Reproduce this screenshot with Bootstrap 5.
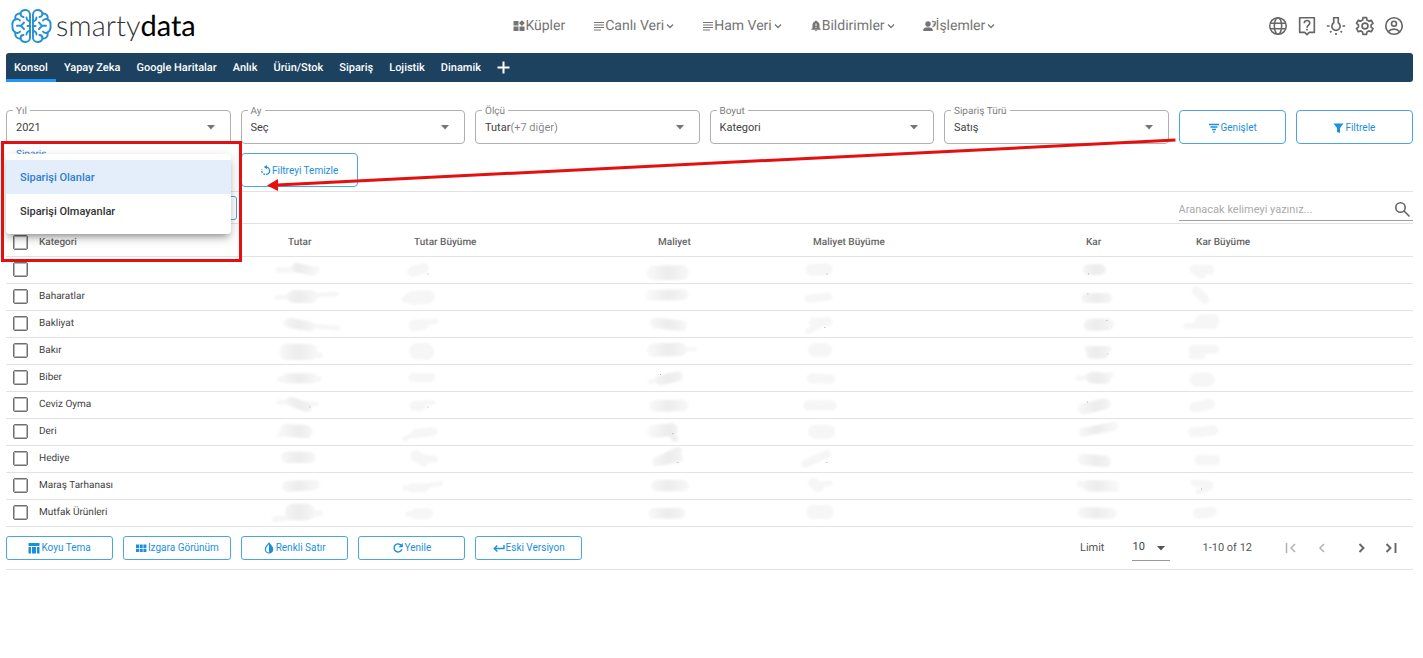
<!DOCTYPE html>
<html lang="tr">
<head>
<meta charset="utf-8">
<meta name="viewport" content="width=device-width, initial-scale=1">
<title>smartydata</title>
<link href="https://cdn.jsdelivr.net/npm/bootstrap@5.3.0/dist/css/bootstrap.min.css" rel="stylesheet">
<script src="https://cdn.jsdelivr.net/npm/bootstrap@5.3.0/dist/js/bootstrap.bundle.min.js"></script>
<style>
  :root { --blue: #1a8fdc; --navy: #1d425f; --line: #e2e2e2; --ink: #424242; --grey: #757575; }
  body { font-family: Roboto, "Liberation Sans", sans-serif; font-size: 11px; line-height: 16px; color: var(--ink); background: #fff; text-rendering: geometricPrecision; }
  svg { flex: none; display: block; }
  .page { padding: 0 10px 0 6px; }
  .topbar { height: 53px; padding: 0 8px 2px 5px; }
  .brand { color: #333; text-decoration: none; margin-right: 46px; gap: 4px; }
  .brand-word { font-family: Lato, sans-serif; font-weight: 300; font-size: 29px; line-height: 34px; }
  .brand-word b { font-weight: 400; color: #000; }
  .mainmenu { gap: 28px; }
  .mainmenu a { color: var(--grey); font-size: 14px; line-height: 20px; text-decoration: none; }
  .mainmenu .chev { margin-left: 2px; }
  .tools { gap: 7px; }
  .tools button, .pager button, .plain { border: 0; background: none; padding: 0; color: #666; }
  .tabs { background: var(--navy); border-radius: 3px; height: 29px; }
  .tabs a { color: #fff; font-weight: 500; padding: 7px 8px 3px; border-bottom: 3px solid transparent; text-decoration: none; line-height: 16px; }
  .tabs a.active { border-color: #2196f3; }
  .filters { margin-top: 28px; row-gap: 9px; }
  .cell { padding-right: 10px; }
  .field { height: 34px; }
  .field label { position: absolute; left: 7px; top: -5px; padding: 0 3px; background: #fff; color: #808080; font-size: 10px; line-height: 14px; }
  .field label.open { color: #2f7fd0; }
  .box { width: 100%; height: 34px; border: 1px solid #b0b0b0; border-radius: 4px; background: #fff; color: var(--ink); padding: 2px 9px 0; appearance: none; text-align: left; }
  .field > svg { position: absolute; right: 16px; top: 15px; color: #757575; pointer-events: none; }
  .act { width: 100%; height: 34px; border: 1px solid #48a7e2; border-radius: 4px; background: #fff; color: var(--blue); display: flex; align-items: center; justify-content: center; gap: 1px; padding: 1px 0 0; font-size: 10px; }
  .act.low { height: 24px; border-radius: 3px; }
  .menu { position: absolute; z-index: 5; left: 0; right: 0; top: 1px; padding: 6px 0; background: #fff; border-radius: 4px; box-shadow: 0 5px 6px -3px rgba(0,0,0,.3), 0 4px 12px rgba(0,0,0,.2); }
  .menu button { display: block; width: 100%; height: 34px; padding: 1px 14px 0; border: 0; background: none; text-align: left; font-weight: 500; color: #333; }
  .menu button.active { background: #e3eefa; color: #2f7fd0; }
  .frame { position: absolute; z-index: 6; left: -5px; right: -11px; top: -12px; height: 121px; border: 3px solid #e60f0f; pointer-events: none; }
  .arrow { position: absolute; z-index: 7; left: 261px; top: 26px; width: calc(83.33% - 264px); height: 56px; pointer-events: none; overflow: visible; }
  .searchrow { margin-top: 4px; height: 33px; border-top: 1px solid var(--line); border-bottom: 1px solid var(--line); }
  .search { width: 16.66%; height: 24px; border-bottom: 1px solid #a0a0a0; color: #666; margin-top: 5px; padding: 2px 2px 0 0; }
  .search input { border: 0; outline: 0; padding: 0; min-width: 0; flex: 1; background: none; color: var(--ink); }
  .search input::placeholder { color: #aaa; opacity: 1; }
  .grid { width: 100%; table-layout: fixed; border-collapse: collapse; font-size: 10px; }
  .grid th, .grid td { padding: 0; border-bottom: 1px solid var(--line); height: 27px; overflow: visible; }
  .grid thead th { height: 32px; padding-top: 6px; font-weight: 500; color: #666; }
  .grid thead th.num { padding-left: 18px; }
  .grid svg { overflow: visible; }
  .grid input { appearance: none; display: block; width: 15px; height: 15px; margin: 0 0 0 7px; border: 1px solid #707070; box-shadow: inset 0 0 0 1px #b5b5b5; border-radius: 2px; background: #fff; }
  .bottom { padding: 8px 0; border-bottom: 1px solid var(--line); }
  .pager { color: #555; padding-right: 13px; font-size: 11px; }
  .limit { width: 38px; height: 26px; border: 0; border-bottom: 1px solid #999; appearance: none; background: #fff; color: var(--ink); padding: 0; }
  .limitbox { margin-left: 28px; }
  .limitbox svg { position: absolute; right: 5px; top: 11px; pointer-events: none; }
  .range { margin: 0 30px 0 32px; }
</style>
</head>
<body>
<svg width="0" height="0" class="position-absolute" aria-hidden="true">
  <defs>
    <filter id="soft" filterUnits="userSpaceOnUse" x="-20" y="-20" width="260" height="120"><feGaussianBlur stdDeviation="2.500"/></filter>
    <linearGradient id="fade" gradientUnits="userSpaceOnUse" x1="15" y1="0" x2="155" y2="0"><stop offset="0" stop-color="#fbfbfb"/><stop offset=".5" stop-color="#ececec"/><stop offset="1" stop-color="#fafafa"/></linearGradient>
    <symbol id="tri" viewBox="0 0 8 5"><path d="M0 0h8L4 4.500z" fill="currentColor"/></symbol>
    <symbol id="chev" viewBox="0 0 8 8"><path d="M1 2.500l3 3 3-3" fill="none" stroke="currentColor" stroke-width="1.300"/></symbol>
    <symbol id="lines" viewBox="0 0 12 12"><path d="M1 2.500h10M1 5h10M1 7.500h10M1 10h7" stroke="currentColor" stroke-width="1"/></symbol>
  </defs>
</svg>
<div class="page">
  <header class="topbar d-flex align-items-center">
    <a class="brand d-flex align-items-center" href="#">
      <svg width="41" height="34" viewBox="0 0 41 34" fill="none" stroke="#2490d3" stroke-width="1.900" stroke-linecap="round" stroke-linejoin="round">
        <g id="lobe">
          <path d="M19 5.500C19 3 17 1 14.500 1C12 1 10 2.500 9.500 4.500C6 4 3.500 7 4.500 10C2 11.500 1 14 1.500 16.500C1 20 2 22 4.500 23.500C3.500 27 6 30 9.500 29.500C10 31.500 12 33 14.500 33C17 33 19 31 19 28.500Z"/>
          <path d="M6 16.800H10L13 13.500M10 16.800L13 20M19 17H16.500M9.500 4.500C9.500 6.500 10.500 8 12.500 8M4.500 10.500C6 9.500 8 10 9 11.500M4.500 23.500C6 24.500 8 24 9 22.500M9.500 29.500C9.500 27.500 10.500 26 12.500 26M19 12C17 12 15.500 10.500 15.500 8.500M19 22C17 22 15.500 23.500 15.500 25.500"/>
        </g>
        <use href="#lobe" transform="matrix(-1 0 0 1 41 0)"/>
      </svg>
      <span class="brand-word">smarty<b>data</b></span>
    </a>
    <nav class="mainmenu d-flex mx-auto">
      <a class="d-flex align-items-center" href="#"><svg width="12" height="12" viewBox="0 0 12 12" fill="currentColor"><path d="M.5 1h5v4.500h-5zM.5 6.500h5V11h-5zM6.500 6.500h5V11h-5zM8.900.2l2.900 2.900-2.900 2.900L6 3.100z"/></svg>Küpler</a>
      <a class="d-flex align-items-center" href="#"><svg width="12" height="12"><use href="#lines"/></svg>Canlı Veri<svg class="chev" width="8" height="8"><use href="#chev"/></svg></a>
      <a class="d-flex align-items-center" href="#"><svg width="12" height="12"><use href="#lines"/></svg>Ham Veri<svg class="chev" width="8" height="8"><use href="#chev"/></svg></a>
      <a class="d-flex align-items-center" href="#"><svg width="12" height="12" viewBox="0 0 12 12"><path d="M6 .5a1 1 0 0 1 1 1C8.800 2 9.500 3.500 9.500 5v3l1.200 1v.7H1.300V9l1.200-1V5C2.500 3.500 3.200 2 5 1.500a1 1 0 0 1 1-1zM4.800 10.300h2.400a1.200 1 0 0 1-2.400 0z" fill="currentColor"/><path d="M6 3.500v2.800M6 7.200v1" stroke="#fff"/></svg>Bildirimler<svg class="chev" width="8" height="8"><use href="#chev"/></svg></a>
      <a class="d-flex align-items-center" href="#"><svg width="13" height="12" viewBox="0 0 13 12" fill="currentColor"><circle cx="5" cy="4" r="2.700"/><path d="M.3 11V9.500C.3 8 3 7.300 5 7.300s4.700.7 4.700 2.200V11z"/><path d="M9.200 1.500l2.300.2M10.500 4.500l1-.5M9.500 6.500c1.500 0 2.500-1 2.800-3V1.500" fill="none" stroke="currentColor" stroke-width="1.300"/></svg>İşlemler<svg class="chev" width="8" height="8"><use href="#chev"/></svg></a>
    </nav>
    <div class="tools d-flex">
      <button aria-label="Dil"><svg width="22" height="22" viewBox="0 0 24 24" fill="none" stroke="currentColor" stroke-width="1.700"><circle cx="12" cy="12" r="9"/><ellipse cx="12" cy="12" rx="4" ry="9"/><path d="M3.500 9h17M3.500 15h17"/></svg></button>
      <button aria-label="Yardım"><svg width="22" height="22" viewBox="0 0 24 24" fill="none" stroke="currentColor" stroke-width="1.800"><path d="M4 3h16v16h-5.500L12 21.500 9.500 19H4z" stroke-linejoin="round"/><path d="M9 9c0-4 6-4 6 0 0 2.200-3 2.200-3 5M12 15v2"/></svg></button>
      <button aria-label="Tema"><svg width="22" height="22" viewBox="0 0 24 24" fill="none" stroke="currentColor" stroke-width="1.800"><path d="M9.500 3h5v5.500a4.500 4.500 0 1 1-5 0zM2 12h3M19 12h3M12 19.500v2.200M5.500 19l1.500-1.500M18.500 19L17 17.500"/></svg></button>
      <button aria-label="Ayarlar"><svg width="22" height="22" viewBox="0 0 24 24" fill="none" stroke="currentColor" stroke-width="1.800"><circle cx="12" cy="12" r="3.200"/><path d="M18.600 13.200c.1-.8.1-1.600 0-2.400l2.200-1.700-2-3.400-2.600 1a7 7 0 0 0-2.100-1.200L13.700 2.800h-3.900l-.4 2.700A7 7 0 0 0 7.300 6.700l-2.600-1-2 3.400 2.200 1.700c-.1.800-.1 1.600 0 2.400l-2.200 1.700 2 3.400 2.600-1a7 7 0 0 0 2.100 1.200l.4 2.700h3.900l.4-2.700a7 7 0 0 0 2.100-1.200l2.600 1 2-3.400z" stroke-linejoin="round"/></svg></button>
      <button aria-label="Hesap"><svg width="22" height="22" viewBox="0 0 24 24" fill="none" stroke="currentColor" stroke-width="1.800"><circle cx="12" cy="12" r="9"/><circle cx="12" cy="9.500" r="2.700"/><path d="M5.800 18.200c3-3.700 9.400-3.700 12.400 0"/></svg></button>
    </div>
  </header>

  <nav class="tabs d-flex">
    <a class="active" href="#">Konsol</a><a href="#">Yapay Zeka</a><a href="#">Google Haritalar</a><a href="#">Anlık</a><a href="#">Ürün/Stok</a><a href="#">Sipariş</a><a href="#">Lojistik</a><a href="#">Dinamik</a>
    <button class="plain text-white px-2" aria-label="Ekle"><svg width="13" height="13" viewBox="0 0 13 13"><path d="M6.500.5v12M.5 6.500h12" stroke="currentColor" stroke-width="2"/></svg></button>
  </nav>

  <main>
    <div class="filters row g-0 position-relative">
      <div class="col-2 cell"><div class="field position-relative"><select class="box" id="yil"><option>2021</option></select><label for="yil">Yıl</label><svg width="8" height="5"><use href="#tri"/></svg></div></div>
      <div class="col-2 cell"><div class="field position-relative"><select class="box" id="ay"><option>Seç</option></select><label for="ay">Ay</label><svg width="8" height="5"><use href="#tri"/></svg></div></div>
      <div class="col-2 cell"><div class="field position-relative"><button class="box" id="olcu" aria-haspopup="listbox">Tutar<span class="text-black-50">(+7 diğer)</span></button><label for="olcu">Ölçü</label><svg width="8" height="5"><use href="#tri"/></svg></div></div>
      <div class="col-2 cell"><div class="field position-relative"><select class="box" id="boyut"><option>Kategori</option></select><label for="boyut">Boyut</label><svg width="8" height="5"><use href="#tri"/></svg></div></div>
      <div class="col-2 cell"><div class="field position-relative"><select class="box" id="tur"><option>Satış</option></select><label for="tur">Sipariş Türü</label><svg width="8" height="5"><use href="#tri"/></svg></div></div>
      <div class="col-1 cell"><button class="act"><svg width="12" height="10" viewBox="0 0 12 10"><path d="M1 1.500h10M2.500 4h7M4 6.500h4M5.300 9h1.400" stroke="currentColor" stroke-width="1.400"/></svg>Genişlet</button></div>
      <div class="col-1"><button class="act"><svg width="11" height="10" viewBox="0 0 11 10"><path d="M.5.500h10L7 5v5L4 9V5z" fill="currentColor"/></svg>Filtrele</button></div>
      <div class="col-2 cell">
        <div class="field position-relative">
          <button class="box border-0" id="siparis" aria-haspopup="listbox" aria-expanded="true"></button><label class="open" for="siparis">Sipariş</label>
          <div class="menu"><button class="active">Siparişi Olanlar</button><button>Siparişi Olmayanlar</button></div>
          <div class="frame"></div>
        </div>
      </div>
      <div class="col-1"><button class="act"><svg width="11" height="11" viewBox="0 0 12 12" fill="none" stroke="currentColor" stroke-width="1.400"><path d="M6.500 2.300a4 4 0 0 1 0 8"/><path d="M5.500 10.200a4 4 0 0 1-3.300-5.500" stroke-dasharray="2 1.200"/><path d="M7.500 0L4.200 2.300l3.300 2.400z" fill="currentColor" stroke="none"/></svg>Filtreyi Temizle</button></div>
      <svg class="arrow" aria-hidden="true"><line x1="100%" y1="4" x2="10" y2="49" stroke="#e60f0f" stroke-width="3"/><path d="M0 49.500L11 43v12z" fill="#e60f0f"/></svg>
    </div>

    <div class="searchrow d-flex justify-content-between">
      <div class="col-2 pt-1 pe-1"><button class="act low" aria-label="Görünüm"></button></div>
      <div class="search d-flex align-items-center"><input type="text" placeholder="Aranacak kelimeyi yazınız..." aria-label="Ara"><svg width="17" height="17" viewBox="0 0 17 17" fill="none" stroke="currentColor" stroke-width="1.600"><circle cx="6.500" cy="6.500" r="4.700"/><path d="M10 10l5.500 5.500"/></svg></div>
    </div>

    <table class="grid">
      <colgroup><col style="width:33px"><col style="width:16.42%"><col style="width:8.96%"><col style="width:17.34%"><col style="width:11.02%"><col style="width:19.4%"><col style="width:7.82%"><col></colgroup>
      <thead><tr><th><input type="checkbox" aria-label="Tümünü seç"></th><th>Kategori</th><th class="num">Tutar</th><th class="num">Tutar Büyüme</th><th class="num">Maliyet</th><th class="num">Maliyet Büyüme</th><th class="num">Kar</th><th class="num">Kar Büyüme</th></tr></thead>
      <tbody id="rows"></tbody>
    </table>

    <div class="bottom row g-0 align-items-center">
      <div class="col-1 cell"><button class="act low"><svg width="12" height="12" viewBox="0 0 12 12" fill="currentColor"><path d="M.5 1h11v3H.5zM.5 5H3v6.500H.5zM4 5h4v6.500H4zM9 5h2.500v6.500H9z"/></svg>Koyu Tema</button></div>
      <div class="col-1 cell"><button class="act low"><svg width="12" height="12" viewBox="0 0 12 12" fill="currentColor"><path d="M1 2.500h3V6H1zM4.700 2.500h3V6h-3zM8.400 2.500h3V6h-3zM1 6.700h3V10H1zM4.700 6.700h3V10h-3zM8.400 6.700h3V10h-3z"/></svg>Izgara Görünüm</button></div>
      <div class="col-1 cell"><button class="act low"><svg width="12" height="12" viewBox="0 0 12 12"><path d="M6 1.200C4 3.500 2.300 5 2.300 7.300a3.700 3.700 0 0 0 7.400 0C9.700 5 8 3.500 6 1.200z" fill="none" stroke="currentColor" stroke-width="1.200"/><path d="M6 1v10a3.700 3.700 0 0 0 3.700-3.700C9.700 5 8 3.500 6 1z" fill="currentColor"/></svg>Renkli Satır</button></div>
      <div class="col-1 cell"><button class="act low"><svg width="12" height="12" viewBox="0 0 12 12"><path d="M9.500 3.800a4 4 0 1 0 .4 3.400" fill="none" stroke="currentColor" stroke-width="1.400"/><path d="M10.800 1v4.300H6.500z" fill="currentColor"/></svg>Yenile</button></div>
      <div class="col-1 cell"><button class="act low"><svg width="12" height="12" viewBox="0 0 12 12" fill="none" stroke="currentColor" stroke-width="1.400"><path d="M11 3v3.500H1.500M4.300 3.500l-3 3 3 3"/></svg>Eski Versiyon</button></div>
      <div class="pager col d-flex align-items-center justify-content-end">
        <label for="limit">Limit</label>
        <div class="limitbox position-relative"><select class="limit" id="limit"><option>10</option></select><svg width="8" height="5"><use href="#tri"/></svg></div>
        <span class="range">1-10 of 12</span>
        <button class="opacity-50" disabled aria-label="İlk sayfa"><svg width="18" height="18" viewBox="0 0 18 18" fill="none" stroke="currentColor" stroke-width="1.500"><path d="M4.500 4v10M13 5L9 9l4 4"/></svg></button>
        <button class="ms-3 opacity-50" disabled aria-label="Önceki"><svg width="12" height="18" viewBox="0 0 12 18" fill="none" stroke="currentColor" stroke-width="1.500"><path d="M8 5L4 9l4 4"/></svg></button>
        <button class="ms-4" aria-label="Sonraki"><svg width="18" height="18" viewBox="0 0 18 18" fill="none" stroke="currentColor" stroke-width="1.900"><path d="M7.500 5l4 4-4 4"/></svg></button>
        <button class="ms-2 ps-1" aria-label="Son sayfa"><svg width="18" height="18" viewBox="0 0 18 18" fill="none" stroke="currentColor" stroke-width="1.900"><path d="M4.500 5l4 4-4 4M13.500 4v10"/></svg></button>
      </div>
    </div>
  </main>
</div>
<script>
// Brush marks that cover the figures: path, brush width, ... in thirds of a pixel; "dot" adds a leftover speck.
const rows = [
  ["", ["M25 39L140 36",20,"M80 32L128 42",30], ["M50 44L82 34",34,"dot",94,50], ["M40 48L125 46",46], ["M50 38L95 36",38,"dot",95,50], ["M60 38H98",34,"dot",60,50], ["M50 38L95 38",32,"M62 44L70 52",30]],
  ["Baharatlar", ["M20 40L200 30",16,"M70 38H125",40], ["M28 46L100 40",24,"M50 42L95 38",44], ["M30 34L130 32",34], ["M40 44L100 38",26], ["M55 42H118",32,"dot",58,29], ["M55 20L80 46",30]],
  ["Bakliyat", ["M45 36L205 52",16,"M60 36L120 46",32], ["M60 40L120 30",18,"M55 44L80 40",36], ["M45 36L125 44",34], ["M55 34L100 32",28,"M40 60L70 45",20,"dot",88,48], ["M65 42L120 40",38,"dot",115,27], ["M25 44L110 44",20,"M70 30L105 28",40]],
  ["Bakır", ["M50 45L150 52",20,"M52 42H118",50], ["M64 40L90 40",52], ["M100 34L165 34",14,"M40 36L120 34",42], ["M60 36L90 36",44], ["M60 34H120",22,"M68 50H106",26,"dot",118,47], ["M45 34L110 34",30,"M40 56L75 56",18]],
  ["Biber", ["M30 42H145",20,"M50 40H130",32], ["M50 38L105 38",28], ["M30 50L70 44",16,"M60 46L115 34",32,"dot",60,28], ["M50 40L105 42",32], ["M30 40L130 30",18,"M70 38L112 40",36], ["M55 44L90 44",44]],
  ["Ceviz Oyma", ["M25 30L140 36",16,"M62 28L112 46",30,"dot",118,44], ["M60 34L110 32",16,"M55 42L75 42",32,"dot",94,44], ["M45 42L130 40",36], ["M40 40L110 40",32], ["M45 50L110 36",36,"dot",57,29], ["M50 46L95 36",34]],
  ["Deri", ["M30 46L120 38",18,"M48 34L108 38",40], ["M25 60L70 40",16,"M60 44L110 38",30], ["M40 38L95 32",40,"M85 30L105 60",22,"dot",97,42], ["M60 38L100 38",44], ["M45 40L140 22",28], ["M45 40L105 34",32]],
  ["Hediye", ["M50 34H120",36], ["M70 36L115 40",24,"M60 30L82 44",36], ["M50 44L115 14",24,"M50 46L115 36",30,"dot",112,49], ["M30 54L95 24",26,"dot",94,49], ["M45 40L112 46",36], ["M65 42L110 42",34]],
  ["Maraş Tarhanası", ["M52 40L135 36",34], ["M25 46L135 32",16,"M50 44L85 44",30], ["M50 38L130 38",36], ["M60 36L105 30",18,"M55 30L70 42",34], ["M35 34L70 36",22,"M60 38L140 40",36], ["M50 30L95 34",24,"M60 56L95 44",18,"dot",69,47]],
  ["Mutfak Ürünleri", ["M15 58L150 40",20,"M70 36L110 36",52], ["M38 42L70 44",20,"M60 42L95 40",34], ["M40 40L120 40",34], ["M55 36L95 36",44], ["M45 38L130 40",36], ["M60 40L100 36",34]]
];
function smudge(parts, col) {
  let marks = "", dots = "";
  for (let i = 0; i < parts.length;) {
    if (parts[i] === "dot") { dots += `<rect x="${parts[i+1]}" y="${parts[i+2]}" width="3" height="2" fill="#888"/>`; i += 3; }
    else {
      const thin = parts[i+1] < 22 || col % 2;
      marks += `<path d="${parts[i]}" stroke-width="${parts[i+1] - 2}" stroke="${thin ? "#f6f6f6" : "url(#fade)"}"/>`; i += 2;
    }
  }
  return `<td><svg width="60" height="26" viewBox="0 0 180 78" aria-hidden="true"><g fill="none" stroke-linecap="round" stroke-linejoin="round" filter="url(#soft)">${marks}</g>${dots}</svg></td>`;
}
document.getElementById("rows").innerHTML = rows.map(([name, ...cells]) =>
  `<tr><td><input type="checkbox" aria-label="${name || "Satır"} seç"></td><td>${name}</td>${cells.map(smudge).join("")}</tr>`).join("");
</script>
</body>
</html>
